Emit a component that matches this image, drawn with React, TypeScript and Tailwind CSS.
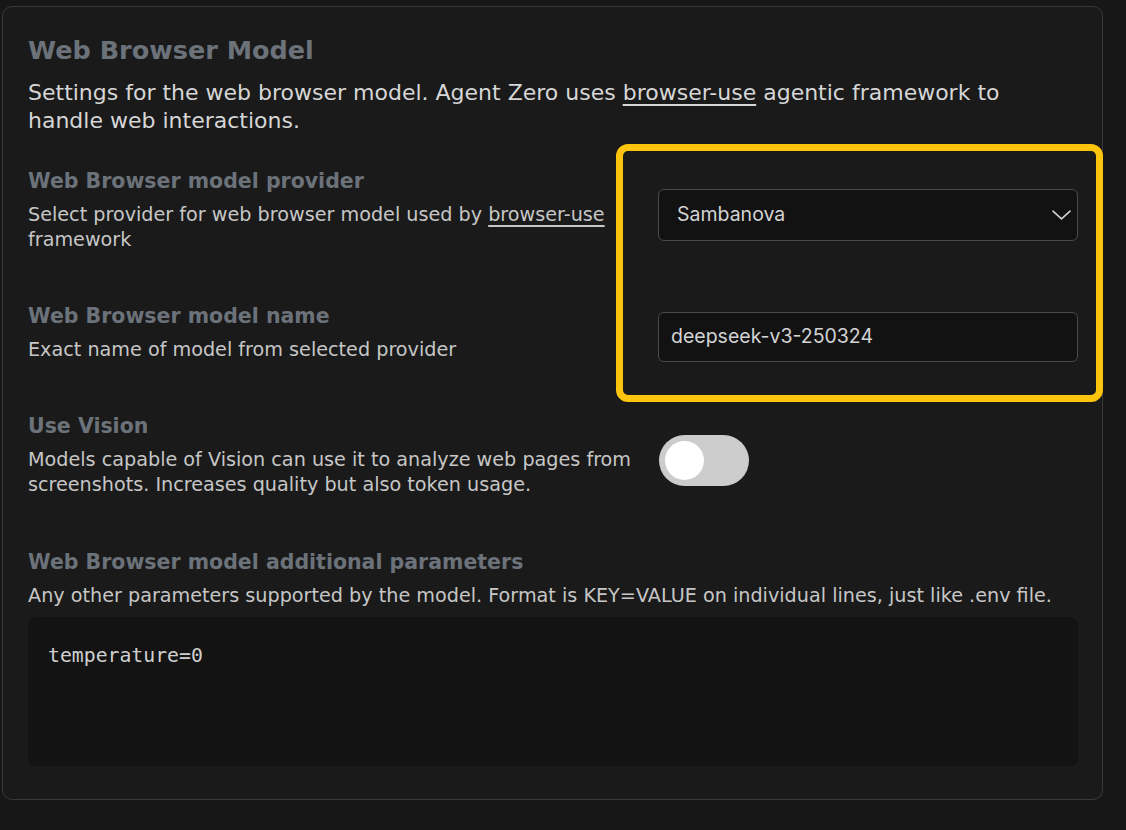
import React from 'react';

function Chevron() {
  return (
    <svg width="19" height="10" viewBox="0 0 19 10" fill="none" stroke="#d2d2d2" strokeWidth="1.6" strokeLinecap="round" strokeLinejoin="round">
      <path d="M1 1.2 9.5 8.8 18 1.2" />
    </svg>
  );
}

function Link({ children }: { children: React.ReactNode }) {
  return <span className="underline underline-offset-[4px] decoration-[1.5px]">{children}</span>;
}

function Title({ children }: { children: React.ReactNode }) {
  return <div className="text-[20.5px] leading-[26px] font-bold text-[#6c727a]">{children}</div>;
}

function Desc({ children }: { children: React.ReactNode }) {
  return <div className="mt-[8px] text-[19.2px] leading-[25px] text-[#c6c6c6]">{children}</div>;
}

export default function App() {
  return (
    <div className="min-h-screen bg-[#171717] pl-[2px] pt-[6px] font-['DejaVu_Sans',sans-serif]">
      <div className="relative w-[1101px] h-[794px] rounded-[10px] border border-[#393939] bg-[#1a1a1a] pl-[25px] pr-[24px] pt-[27px]">
        <h2 className="text-[25.5px] leading-[32px] font-bold text-[#6c727a]">Web Browser Model</h2>
        <p className="mt-[13px] w-[1010px] text-[22px] leading-[28px] text-[#d6d6d6]">
          Settings for the web browser model. Agent Zero uses <Link>browser-use</Link> agentic framework to handle web
          interactions.
        </p>

        {/* provider */}
        <div className="mt-[33px] flex items-start justify-between">
          <div className="w-[610px]">
            <Title>Web Browser model provider</Title>
            <Desc>
              Select provider for web browser model used by <Link>browser-use</Link> framework
            </Desc>
          </div>
          <div className="mt-[21px] flex h-[52px] w-[420px] items-center justify-between rounded-[6px] border border-[#4a4a4a] bg-[#121212] pl-[18px] pr-[6px] font-['Inter',sans-serif] text-[19.5px] text-[#d4d4d4]">
            <span>Sambanova</span>
            <Chevron />
          </div>
        </div>

        {/* model name */}
        <div className="mt-[51px] flex items-start justify-between">
          <div className="w-[600px]">
            <Title>Web Browser model name</Title>
            <Desc>Exact name of model from selected provider</Desc>
          </div>
          <div className="mt-[9px] flex h-[50px] w-[420px] items-center rounded-[6px] border border-[#4a4a4a] bg-[#121212] px-[12px] font-['Inter',sans-serif] text-[19.5px] text-[#d4d4d4]">
            deepseek-v3-250324
          </div>
        </div>

        {/* vision */}
        <div className="mt-[51px] flex items-start justify-between">
          <div className="w-[615px]">
            <Title>Use Vision</Title>
            <Desc>
              Models capable of Vision can use it to analyze web pages from screenshots. Increases quality but also token
              usage.
            </Desc>
          </div>
          <div className="mt-[22px] mr-[329px] flex h-[51px] w-[90px] items-center rounded-full bg-[#cccccc] px-[6px]">
            <div className="h-[39px] w-[39px] rounded-full bg-white" />
          </div>
        </div>

        {/* params */}
        <div className="mt-[52px]">
          <Title>Web Browser model additional parameters</Title>
          <Desc>Any other parameters supported by the model. Format is KEY=VALUE on individual lines, just like .env file.</Desc>
          <div className="mt-[9px] h-[149px] w-full rounded-[8px] bg-[#131313] pl-[20px] pt-[27px] font-['DejaVu_Sans_Mono',monospace] text-[19.8px] leading-[24px] text-[#cfcfcf]">
            temperature=0
          </div>
        </div>

        <div className="absolute left-[613px] top-[137px] h-[258px] w-[487px] rounded-[12px] border-[7px] border-[#ffc40c]" />
      </div>
    </div>
  );
}
